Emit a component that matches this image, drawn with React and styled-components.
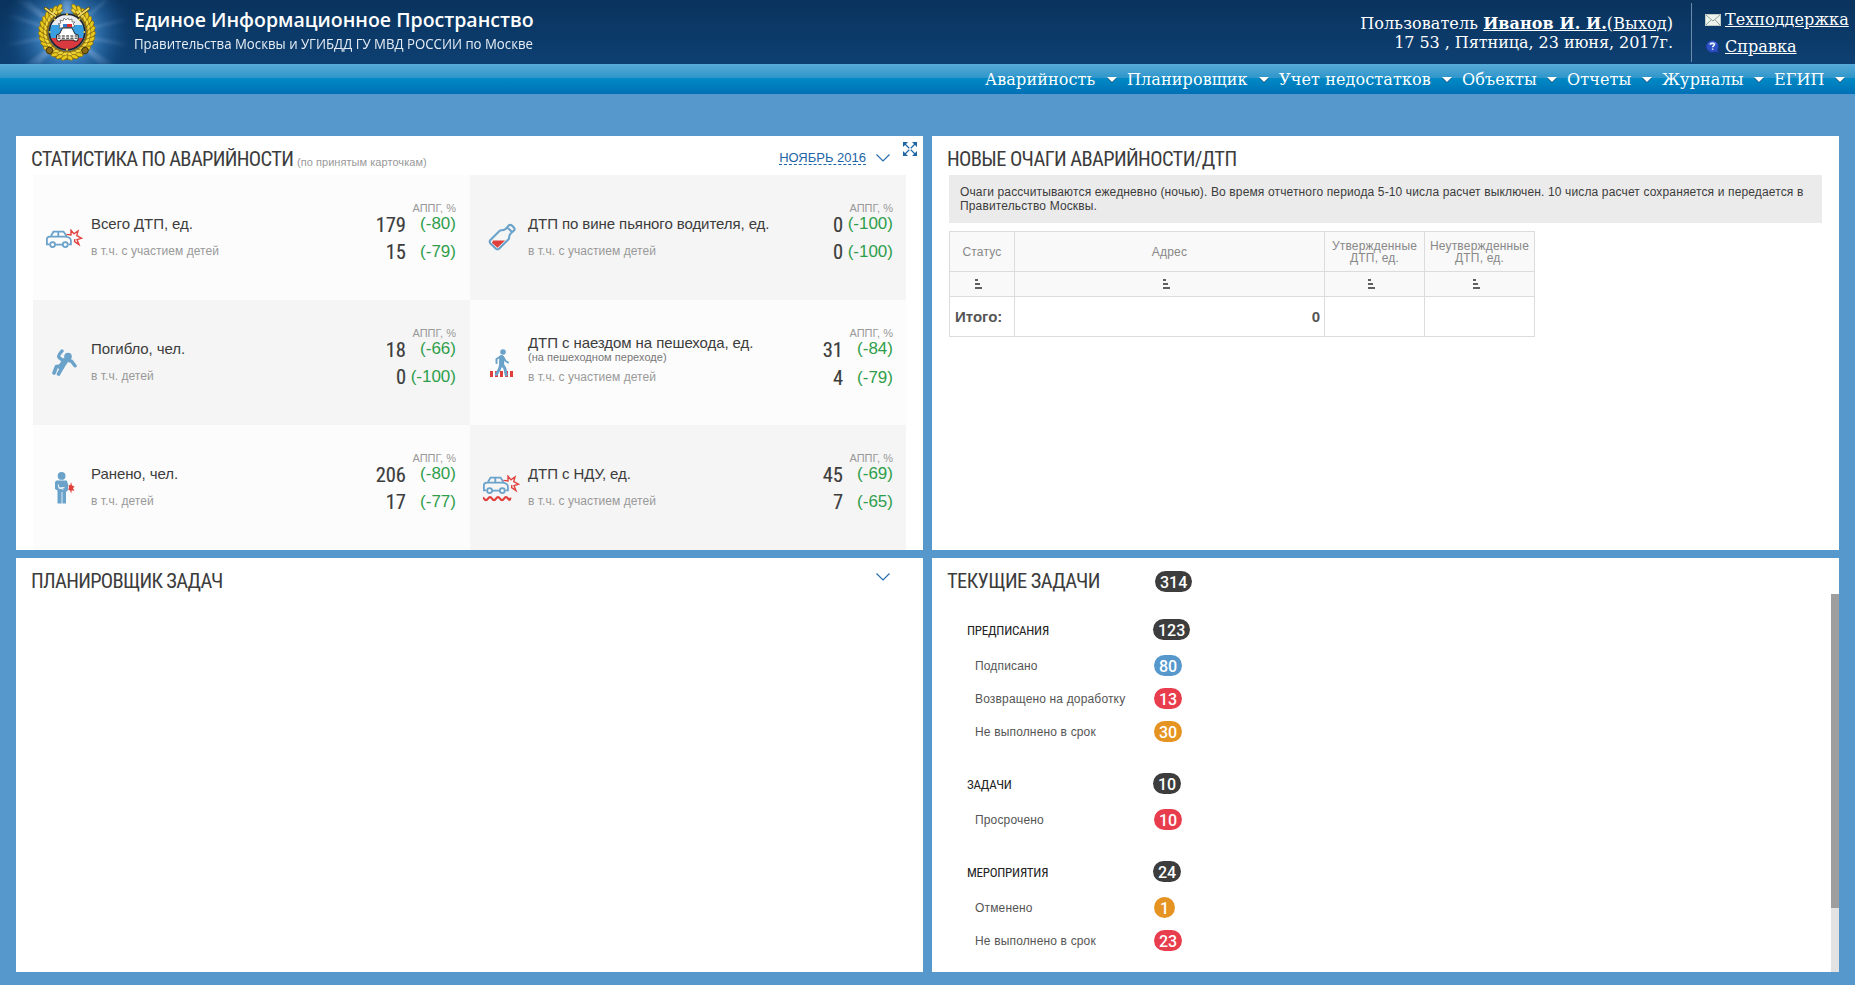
import React from "react";
import styled, { createGlobalStyle } from "styled-components";

const Global = createGlobalStyle`
  *, *::before, *::after { box-sizing: border-box; }
  body { margin: 0; background: #5697cc; font-family: "Liberation Sans", Arial, sans-serif; }
`;

const Page = styled.div`
  width: 1855px;
  height: 985px;
  overflow: hidden;
  background: #5697cc;
`;

/* ---------- header ---------- */
const Header = styled.header`
  height: 64px;
  display: flex;
  background: linear-gradient(#0a335e, #0d4072);
  color: #fff;
  font: 16px/19px "DejaVu Serif", serif;
`;
const Brand = styled.div`
  display: flex;
  flex: 1;
`;
const BrandText = styled.div`
  display: flex;
  flex-direction: column;
  margin-left: -2px;
  font-family: "Open Sans", sans-serif;
  white-space: nowrap;
`;
const BrandTitle = styled.span`
  margin-top: 6px;
  font-size: 19.5px;
  line-height: 28px;
  font-weight: 600;
`;
const BrandSub = styled.span`
  font-size: 14px;
  line-height: 20px;
  transform: scaleX(0.944);
  transform-origin: 0 50%;
  color: #e6edf5;
`;
const UserBox = styled.div`
  padding: 14px 18px 0 0;
  text-align: right;
  white-space: pre;
`;
const UserLine = styled.div`
  letter-spacing: ${(p) => p.$ls}px;
`;
const Link = styled.a`
  color: #fff;
  text-decoration: underline;
  font-weight: ${(p) => (p.$bold ? 700 : 400)};
`;
const Help = styled.div`
  width: 164px;
  margin: 3px 0 2px;
  padding: 7px 0 0 13px;
  border-left: 1px solid #6d8ba8;
  display: flex;
  flex-direction: column;
  gap: 8px;
`;
const HelpRow = styled.div`
  display: flex;
  align-items: center;
  gap: 4px;
  height: 19px;
  letter-spacing: 0.05px;
  svg { flex: none; }
`;
const Nav = styled.nav`
  height: 30px;
  display: flex;
  justify-content: flex-end;
  background: linear-gradient(#58abd8 0, #2f95ca 14px, #008ac6 14px, #0070b5 30px);
  color: #fff;
  font: 16px/31px "DejaVu Serif", serif;
`;
const NavItem = styled.a`
  display: flex;
  align-items: center;
  justify-content: space-between;
  width: ${(p) => p.$w}px;
  padding-right: 10px;
  white-space: nowrap;
  letter-spacing: 0.12px;
  &::after {
    content: "";
    border: 5px solid transparent;
    border-top-color: #fff;
    border-bottom: 0;
    filter: drop-shadow(0 1px 0 #14507c);
  }
`;

/* ---------- panels ---------- */
const Board = styled.main`
  display: grid;
  grid-template-columns: 907px 907px;
  grid-template-rows: 414px 414px;
  gap: 8px 9px;
  padding: 42px 16px 0;
`;
const Panel = styled.section`
  background: #fff;
  overflow: hidden;
  display: flex;
  flex-direction: column;
`;
const PanelHead = styled.div`
  height: ${(p) => p.$h || 39}px;
  flex: none;
  display: flex;
  padding-left: 15px;
`;
const Title = styled.h2`
  width: ${(p) => p.$w}px;
  margin: 9px 0 0;
  font: 400 20.5px/28px "Roboto Condensed", Roboto, sans-serif;
  letter-spacing: ${(p) => p.$ls}px;
  white-space: nowrap;
  color: #3c3c3c;
`;
const Note = styled.span`
  margin: 19px 0 0 4px;
  font-size: 11px;
  line-height: 14px;
  letter-spacing: 0.05px;
  color: #999;
`;
const Period = styled.span`
  margin: 14px 10px auto auto;
  height: 15px;
  font-size: 13px;
  line-height: 15px;
  color: #1d65a6;
  border-bottom: 1px dashed #1d65a6;
`;
const ChevronSlot = styled.span`
  margin: ${(p) => p.$m};
  height: 8px;
  svg { display: block; }
`;
const ExpandSlot = styled.span`
  margin: 6px 6px 0 0;
  svg { display: block; }
`;

/* ---------- statistics ---------- */
const Stats = styled.div`
  display: grid;
  grid-template-columns: 437px 436px;
  grid-auto-rows: 125px;
  margin-left: 17px;
`;
const Cell = styled.div`
  display: flex;
  background: ${(p) => (p.$dark ? "#f5f5f5" : "#fcfcfc")};
  padding-right: ${(p) => (p.$right ? 13 : 14)}px;
`;
const IconSlot = styled.div`
  width: 58px;
  svg { display: block; }
`;
const CellText = styled.div`
  flex: 1;
  padding-top: ${(p) => (p.$note ? 33 : 39)}px;
`;
const Label = styled.div`
  font-size: 15px;
  line-height: 20px;
  letter-spacing: -0.08px;
  color: #3c3c3c;
`;
const LabelNote = styled.div`
  font-size: 11px;
  line-height: 13px;
  margin-top: -2px;
  letter-spacing: 0.04px;
  color: #777;
`;
const Sub = styled.div`
  font-size: 12px;
  line-height: 16px;
  margin-top: ${(p) => (p.$note ? 5 : 9)}px;
  letter-spacing: 0.05px;
  color: #999;
`;
const Figures = styled.div`
  display: grid;
  grid-template-columns: 58px 50px;
  grid-template-rows: 14px ${(p) => (p.$note ? 28 : 27)}px 27px;
  padding-top: 26px;
  text-align: right;
`;
const Legend = styled.span`
  grid-column: 1 / 3;
  font-size: 11px;
  line-height: 14px;
  color: #999;
`;
const Num = styled.span`
  margin-top: -3px;
  font: 400 20.5px/27px "Roboto Condensed", Roboto, sans-serif;
  color: #3c3c3c;
  -webkit-text-stroke: 0.15px #3c3c3c;
`;
const Pct = styled.span`
  font-size: 17px;
  line-height: 22px;
  color: #2f9e4b;
  margin: ${(p) => (p.$first ? -2 : -1)}px 0 0 -6px;
`;

/* ---------- hot spots ---------- */
const Info = styled.div`
  margin: 0 17px 8px;
  height: 48px;
  padding: 10px 11px;
  background: #ebebeb;
  font-size: 12px;
  line-height: 14px;
  letter-spacing: 0.14px;
  color: #3c3c3c;
`;
const Table = styled.table`
  margin-left: 17px;
  width: 586px;
  table-layout: fixed;
  border-collapse: collapse;
  th, td { border: 1px solid #dcdcdc; padding: 0; }
  th {
    background: #f9f9f9;
    font-size: 12px;
    line-height: 12px;
    font-weight: 400;
    letter-spacing: 0.18px;
    color: #888;
  }
  td { font-size: 15px; font-weight: 700; color: #555; }
`;
const HeadRow = styled.tr`height: 40px;`;
const SortRow = styled.tr`
  height: 25px;
  && th { padding-right: 7px; }
  svg { display: block; margin: 0 auto; }
`;
const TotalRow = styled.tr`
  height: 40px;
  && td:first-child { padding-left: 5px; }
  && td:nth-child(2) { text-align: right; padding-right: 4px; }
`;

/* ---------- tasks ---------- */
const colors = { dark: "#3d3d3d", blue: "#5697cc", red: "#e83d4d", orange: "#e59422" };
const Badge = styled.span`
  display: inline-block;
  height: 21px;
  padding: 0 5px;
  min-width: 21px;
  border-radius: 10.5px;
  background: ${(p) => colors[p.$c]};
  color: #fff;
  font: 500 16px/23px Roboto, sans-serif;
  text-align: center;
`;
const HeadBadge = styled(Badge)`
  margin: 13px 0 0 56px;
`;
const TaskBody = styled.div`
  flex: 1;
  display: flex;
  justify-content: space-between;
`;
const TaskList = styled.div`padding-top: 25px;`;
const TaskGroup = styled.div`
  margin-bottom: 31px;
`;
const GroupRow = styled.div`
  display: grid;
  grid-template-columns: 186px auto;
  justify-content: start;
  padding-left: 35px;
  height: 36px;
`;
const GroupName = styled.span`
  font: 400 13px/24px "Roboto Condensed", Roboto, sans-serif;
  letter-spacing: -0.25px;
  color: #222;
`;
const TaskRow = styled.div`
  display: grid;
  grid-template-columns: 179px auto;
  justify-content: start;
  padding-left: 43px;
  height: 21px;
  margin-bottom: 12px;
  font-size: 12px;
  line-height: 22px;
  letter-spacing: 0.16px;
  color: #555;
  ${Badge} { letter-spacing: 0; }
`;
const Track = styled.div`
  width: 8px;
  background: #e3e3e3;
`;
const Thumb = styled.div`
  height: 314px;
  background: #9e9e9e;
`;

/* ---------- drawings ---------- */
const ring = (n, r, gap) =>
  Array.from({ length: n }, (_, i) => ((i + 0.5) * 360) / n)
    .filter((a) => a > gap && a < 360 - gap)
    .map((a) => {
      const t = ((a - 90) * Math.PI) / 180;
      return { a, x: 67 + r * Math.cos(t), y: 32 + r * Math.sin(t) };
    });

function Emblem() {
  const outer = ring(32, 25.6, 12);
  const inner = ring(30, 22, 12);
  return (
    <svg width="136" height="64" viewBox="0 0 136 64">
      <defs>
        <radialGradient id="glow" gradientUnits="userSpaceOnUse" cx="67" cy="34" r="68">
          <stop offset="0" stopColor="#7cc0f4" />
          <stop offset=".42" stopColor="#3a80bf" stopOpacity=".85" />
          <stop offset=".72" stopColor="#1d5a94" stopOpacity=".5" />
          <stop offset="1" stopColor="#0c3a69" stopOpacity="0" />
        </radialGradient>
        <radialGradient id="ray" gradientUnits="userSpaceOnUse" cx="67" cy="34" r="62">
          <stop offset=".3" stopColor="#cbdcff" stopOpacity=".4" />
          <stop offset="1" stopColor="#a9c8f0" stopOpacity="0" />
        </radialGradient>
        <clipPath id="disc"><circle cx="67" cy="32" r="17" /></clipPath>
        <filter id="soft"><feGaussianBlur stdDeviation="1.5" /></filter>
      </defs>
      <rect width="136" height="64" fill="url(#glow)" />
      <g fill="url(#ray)" filter="url(#soft)">
        <path d="M67 34 0 10 0 15zM67 34 14 0 28 0zM67 34 104 0 109 0zM67 34 136 15 136 19zM67 34 136 44 136 49zM67 34 100 64 114 64zM67 34 26 64 40 64zM67 34 0 44 0 48zM67 34 62 0 72 0z" />
      </g>
      <path d="M60 10A23.3 23.3 0 1 0 74 10" fill="none" stroke="#8a6c10" strokeWidth="9" />
      {outer.map((l) => (
        <ellipse key={"a" + l.a} cx={l.x} cy={l.y} rx="2" ry="3.9" fill="#e6c71c" stroke="#6b500a" strokeWidth=".5"
          transform={`rotate(${l.a + (l.a > 180 ? 50 : -50)} ${l.x} ${l.y})`} />
      ))}
      {inner.map((l) => (
        <ellipse key={"b" + l.a} cx={l.x} cy={l.y} rx="1.6" ry="3.2" fill="#efd63a" stroke="#7d600e" strokeWidth=".5"
          transform={`rotate(${l.a + (l.a > 180 ? 70 : -70)} ${l.x} ${l.y})`} />
      ))}
      <g stroke="#5d4704" strokeWidth="3.4" strokeLinecap="round">
        <path d="M45.5 8.5 55.5 16M88.500 8.5 78.5 16" />
      </g>
      <g stroke="#f0db66" strokeWidth="1.7" strokeLinecap="round">
        <path d="M45.5 8.5 55.5 16M88.5 8.5 78.5 16M55 11 51 16M79 11 83 16" />
      </g>
      <g fill="#8a6a14" stroke="#453304" strokeWidth="1">
        <circle cx="49.5" cy="50.5" r="3.3" /><circle cx="85" cy="50.5" r="3.3" />
      </g>
      <circle cx="67" cy="32" r="18.6" fill="#20242c" />
      <g clipPath="url(#disc)">
        <rect x="49" y="14" width="36" height="13" fill="#e9edf2" />
        <path d="M49 14h36v4q-18-5-36 0z" fill="#9a9fa6" />
        <rect x="49" y="25" width="36" height="14" fill="#3a9fe0" />
        <rect x="49" y="38" width="36" height="14" fill="#d93a3f" />
      </g>
      <path d="m59 28 1-3-2-1 3-1-1-3 3 1 1-3 2 2 2-2 1 2 3-1v3l3 0-2 2 2 2-2 1z" fill="#fff" stroke="#444" strokeWidth=".6" />
      <rect x="63" y="24" width="4" height="3" fill="#3179c8" />
      <rect x="67" y="24" width="5" height="3" fill="#e02a2f" />
      <path d="m59.5 34 3-6h9.5l3 6 3.3 1v3.5l-1 2.5h-3.3v-1H60.5v1h-3l-1-2.5V35z" fill="#fff" stroke="#1b1b1b" strokeWidth=".9" />
      <path d="M57.5 36h20M57.5 38.2h20" stroke="#1b1b1b" strokeWidth="1" strokeDasharray="3 1.3" />
      <g fill="#e8cc3c">
        <circle cx="67" cy="14.4" r="1.1" /><circle cx="49.6" cy="32" r="1" /><circle cx="84.4" cy="32" r="1" />
        <circle cx="67" cy="49.6" r="1.1" /><circle cx="54.7" cy="19.6" r="1" /><circle cx="79.3" cy="19.6" r="1" />
      </g>
    </svg>
  );
}

const Mail = () => (
  <svg width="16" height="12" viewBox="0 0 16 12">
    <rect x=".5" y=".5" width="15" height="11" fill="#eef3ee" stroke="#c3cdc8" />
    <path d="M1 1l7 6 7-6M1 11l5-5.2M15 11l-5-5.2" fill="none" stroke="#8fa39c" strokeWidth="1" />
  </svg>
);
const Ask = () => (
  <svg width="16" height="14" viewBox="0 0 16 14">
    <path d="M7.3.5a6.3 6 0 0 1 5.2 9.3l1.2 3-3.3-1A6.3 6 0 1 1 7.3.5z" fill="#2c50c4" stroke="#1b3490" strokeWidth=".6" />
    <path d="M3 4a5 4 0 0 1 9 0q-4 2-9 0z" fill="#6f93ea" opacity=".7" />
    <path d="M5.4 4.8q.1-1.7 2-1.7t2 1.5c0 1.3-1.8 1.3-1.8 2.7M7.6 8.4v1.4" fill="none" stroke="#fff" strokeWidth="1.4" />
  </svg>
);
const Chevron = () => (
  <svg width="14" height="8" viewBox="0 0 14 8">
    <path d="M.5.5 7 7 13.5.5" fill="none" stroke="#2a6cab" strokeWidth="1.2" />
  </svg>
);
const Expand = () => (
  <svg width="14" height="14" viewBox="0 0 14 14">
    <path d="M2 2l10 10M12 2 2 12" stroke="#1f66a5" strokeWidth="1.2" />
    <path d="M0 0h5L0 5zM14 0v5L9 0zM0 14V9l5 5zM14 14H9l5-5z" fill="#1f66a5" />
    <path d="M7 5.6 8.4 7 7 8.4 5.6 7z" fill="#fff" />
  </svg>
);
const Sort = () => (
  <svg width="7" height="10" viewBox="0 0 7 10" shapeRendering="crispEdges">
    <path d="M0 0h3v2H0zM0 4h5v2H0zM0 8h7v2H0z" fill="#606060" />
  </svg>
);

const carBody = (
  <>
    <g fill="none" stroke="#6aa2ca" strokeWidth="1.8">
      <path d="M3.2 15.4H.9V10q0-2.2 3-2.4h15q6 .3 6 4v3.8h-2.2M9.6 15.6h6.6" />
      <path d="M5 7 7.5 2.6h10L20.5 7M12.3 2.6V7" />
      <circle cx="6.6" cy="15.6" r="2.5" /><circle cx="19.3" cy="15.6" r="2.5" />
    </g>
    <path d="M20.5 5.4 25 6l0-4.8 3 3.7L32 2l-1.2 4.6 4.6 2.6-4.4 1.4 2 5-4.4-3 .2-2.6" fill="none" stroke="#e0433f" strokeWidth="1.4" />
  </>
);
const icons = {
  car: { box: [13, 54, 37, 19], art: carBody },
  bottle: {
    box: [18, 48, 28, 28],
    art: (
      <>
        <path d="M5 17.5h12l-7.5 7.2L4 20z" fill="#e0403c" />
        <path d="M21 2.2q1.6-1 3.2.5l1.8 2q1.2 1.8-.2 3L22.6 10.4q-1.6 1.6-1.8 5.6L11 25.8q-1.5 1-3 0L2.2 20.2q-1-1.5 0-3L12 7.5q4.4-.2 6-1.8zM19.5 4.5l4.5 4.5" fill="none" stroke="#6aa2ca" strokeWidth="2.1" strokeLinejoin="round" />
      </>
    ),
  },
  fall: {
    box: [18, 49, 26, 27],
    art: (
      <g fill="none" stroke="#6aa2ca" strokeLinecap="round" strokeLinejoin="round">
        <circle cx="17" cy="7.5" r="3.8" fill="#6aa2ca" stroke="none" />
        <path d="M14.2 11.8 10 18" strokeWidth="6" />
        <path d="M13.5 12Q8.5 9.5 7.8 8T11 2M15.5 11l5 1.2 3.5 4.6" strokeWidth="3.4" />
        <path d="M10.5 17l-5 .5L3 24M11.5 18l-4 7" strokeWidth="3.6" />
      </g>
    ),
  },
  walk: {
    box: [20, 49, 23, 28],
    art: (
      <>
        <path d="M0 22h3v6H0zM5 22h3v6H5zM10 22h3v6h-3zM15 22h3v6h-3zM20 22h3v6h-3z" fill="#e0403c" />
        <g fill="none" stroke="#6aa2ca" strokeLinecap="round" strokeLinejoin="round">
          <circle cx="13" cy="3" r="2.8" fill="#6aa2ca" stroke="none" />
          <path d="M11.6 8.5v7.5" strokeWidth="5" />
          <path d="M10.5 7.5 6.5 10v4M13.5 8.5l2 3.5 2.5 1.5" strokeWidth="2" />
          <path d="M10.8 15.5 9.5 20l-3.2 5.5M12.5 15.5l2.4 4 1.3 6.5" strokeWidth="3" />
        </g>
      </>
    ),
  },
  hurt: {
    box: [22, 47, 21, 33],
    art: (
      <>
        <circle cx="6.6" cy="3.9" r="3.9" fill="#6aa2ca" />
        <path d="M1.5 8.5h10.2l1.3 3.5v6l-2 2v11.5H7.4V20h-.8v11.5H2.5V18.6L0 17V10z" fill="#6aa2ca" />
        <path d="M3.3 12.5q.3 3 1 3.5l5.2-.4M3.5 15.8l5 1.4" fill="none" stroke="#fcfcfc" strokeWidth="1" />
        <path d="M19.5 14.5 17 13.6 16 10l-.8 3.4-1.7-.6.4 2.8-.6 2.5 1.6.2 1.4 3.2.4-3.2 2.7.6-1.4-2.6z" fill="#e0403c" />
      </>
    ),
  },
  ndu: {
    box: [13, 50, 37, 27],
    art: (
      <>
        {carBody}
        <path d="M0 22.3 1 23.6q2 3 4 0t4 0 4 0 4 0 4 0 4 0 2.5-1" fill="none" stroke="#e0403c" strokeWidth="2.1" />
      </>
    ),
  },
};
const IconSvg = styled.svg`
  margin: ${(p) => p.$y}px 0 0 ${(p) => p.$x}px;
`;
function StatIcon({ name }) {
  const { box: [x, y, w, h], art } = icons[name];
  return (
    <IconSlot>
      <IconSvg $x={x} $y={y} width={w} height={h} viewBox={`0 0 ${w} ${h}`}>{art}</IconSvg>
    </IconSlot>
  );
}

/* ---------- data ---------- */
const kids = "в т.ч. с участием детей";
const stats = [
  { icon: "car", label: "Всего ДТП, ед.", sub: kids, a: [179, -80], b: [15, -79] },
  { icon: "bottle", label: "ДТП по вине пьяного водителя, ед.", sub: kids, a: [0, -100], b: [0, -100], dark: true },
  { icon: "fall", label: "Погибло, чел.", sub: "в т.ч. детей", a: [18, -66], b: [0, -100], dark: true },
  { icon: "walk", label: "ДТП с наездом на пешехода, ед.", note: "(на пешеходном переходе)", sub: kids, a: [31, -84], b: [4, -79] },
  { icon: "hurt", label: "Ранено, чел.", sub: "в т.ч. детей", a: [206, -80], b: [17, -77] },
  { icon: "ndu", label: "ДТП с НДУ, ед.", sub: kids, a: [45, -69], b: [7, -65], dark: true },
];
const groups = [
  { name: "ПРЕДПИСАНИЯ", n: 123, rows: [["Подписано", 80, "blue"], ["Возвращено на доработку", 13, "red"], ["Не выполнено в срок", 30, "orange"]] },
  { name: "ЗАДАЧИ", n: 10, rows: [["Просрочено", 10, "red"]] },
  { name: "МЕРОПРИЯТИЯ", n: 24, rows: [["Отменено", 1, "orange"], ["Не выполнено в срок", 23, "red"]] },
];
const menu = [
  ["Аварийность", 142],
  ["Планировщик", 152],
  ["Учет недостатков", 183],
  ["Объекты", 105],
  ["Отчеты", 95],
  ["Журналы", 112],
  ["ЕГИП", 81],
];

export default function App() {
  return (
    <Page>
      <Global />
      <Header>
        <Brand>
          <Emblem />
          <BrandText>
            <BrandTitle>Единое Информационное Пространство</BrandTitle>
            <BrandSub>Правительства Москвы и УГИБДД ГУ МВД РОССИИ по Москве</BrandSub>
          </BrandText>
        </Brand>
        <UserBox>
          <UserLine $ls={0.09}>Пользователь <Link $bold>Иванов И. И.</Link>(<Link>Выход</Link>)</UserLine>
          <UserLine $ls={-0.05}>17 53 , Пятница, 23 июня, 2017г.</UserLine>
        </UserBox>
        <Help>
          <HelpRow><Mail /><Link>Техподдержка</Link></HelpRow>
          <HelpRow><Ask /><Link>Справка</Link></HelpRow>
        </Help>
      </Header>
      <Nav>{menu.map(([name, w]) => <NavItem key={name} $w={w}>{name}</NavItem>)}</Nav>
      <Board>
        <Panel>
          <PanelHead>
            <Title $w={262} $ls={-0.67}>СТАТИСТИКА ПО АВАРИЙНОСТИ</Title>
            <Note>(по принятым карточкам)</Note>
            <Period>НОЯБРЬ 2016</Period>
            <ChevronSlot $m="18px 13px 0 0"><Chevron /></ChevronSlot>
            <ExpandSlot><Expand /></ExpandSlot>
          </PanelHead>
          <Stats>
            {stats.map((s, i) => (
              <Cell key={s.label} $dark={s.dark} $right={i % 2 === 1}>
                <StatIcon name={s.icon} />
                <CellText $note={s.note}>
                  <Label>{s.label}</Label>
                  {s.note && <LabelNote>{s.note}</LabelNote>}
                  <Sub $note={s.note}>{s.sub}</Sub>
                </CellText>
                <Figures $note={s.note}>
                  <Legend>АППГ, %</Legend>
                  <Num>{s.a[0]}</Num><Pct $first>({s.a[1]})</Pct>
                  <Num>{s.b[0]}</Num><Pct>({s.b[1]})</Pct>
                </Figures>
              </Cell>
            ))}
          </Stats>
        </Panel>
        <Panel>
          <PanelHead>
            <Title $w={290} $ls={-0.62}>НОВЫЕ ОЧАГИ АВАРИЙНОСТИ/ДТП</Title>
          </PanelHead>
          <Info>Очаги рассчитываются ежедневно (ночью). Во время отчетного периода 5-10 числа расчет выключен. 10 числа расчет сохраняется и передается в Правительство Москвы.</Info>
          <Table>
            <colgroup><col width="65" /><col width="310" /><col width="100" /><col width="110" /></colgroup>
            <tbody>
              <HeadRow><th>Статус</th><th>Адрес</th><th>Утвержденные<br />ДТП, ед.</th><th>Неутвержденные<br />ДТП, ед.</th></HeadRow>
              <SortRow><th><Sort /></th><th><Sort /></th><th><Sort /></th><th><Sort /></th></SortRow>
              <TotalRow><td>Итого:</td><td>0</td><td /><td /></TotalRow>
            </tbody>
          </Table>
        </Panel>
        <Panel>
          <PanelHead>
            <Title $w={260} $ls={-0.71}>ПЛАНИРОВЩИК ЗАДАЧ</Title>
            <ChevronSlot $m="15px 33px 0 auto"><Chevron /></ChevronSlot>
          </PanelHead>
        </Panel>
        <Panel>
          <PanelHead $h={36}>
            <Title $w={152} $ls={-0.58}>ТЕКУЩИЕ ЗАДАЧИ</Title>
            <HeadBadge $c="dark">314</HeadBadge>
          </PanelHead>
          <TaskBody>
            <TaskList>
              {groups.map((g) => (
                <TaskGroup key={g.name}>
                  <GroupRow><GroupName>{g.name}</GroupName><div><Badge $c="dark">{g.n}</Badge></div></GroupRow>
                  {g.rows.map(([name, n, c]) => (
                    <TaskRow key={name}><span>{name}</span><div><Badge $c={c}>{n}</Badge></div></TaskRow>
                  ))}
                </TaskGroup>
              ))}
            </TaskList>
            <Track><Thumb /></Track>
          </TaskBody>
        </Panel>
      </Board>
    </Page>
  );
}
